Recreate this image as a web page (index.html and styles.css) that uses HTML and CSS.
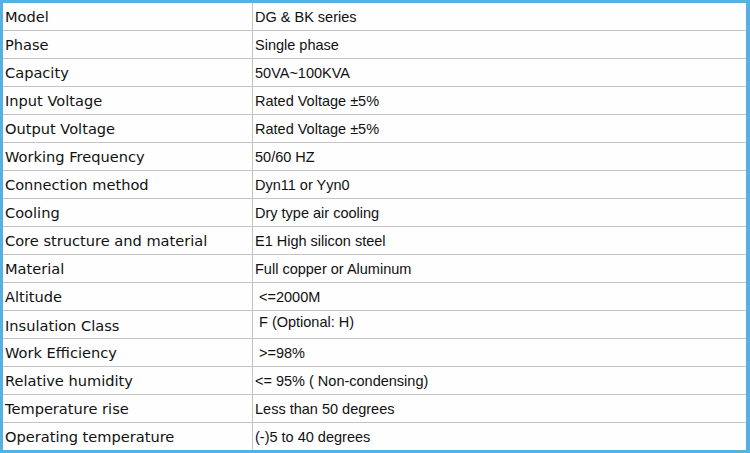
FILE: index.html
```html
<!DOCTYPE html>
<html>
<head>
<meta charset="utf-8">
<link rel="stylesheet" href="styles.css">
</head>
<body>
<div class="frame">
  <table class="spec">
    <tr><td class="k">Model</td><td class="v">DG &amp; BK series</td></tr>
    <tr><td class="k">Phase</td><td class="v">Single phase</td></tr>
    <tr><td class="k">Capacity</td><td class="v">50VA~100KVA</td></tr>
    <tr><td class="k">Input Voltage</td><td class="v">Rated Voltage ±5%</td></tr>
    <tr><td class="k">Output Voltage</td><td class="v">Rated Voltage ±5%</td></tr>
    <tr><td class="k">Working Frequency</td><td class="v">50/60 HZ</td></tr>
    <tr><td class="k">Connection method</td><td class="v">Dyn11 or Yyn0</td></tr>
    <tr><td class="k">Cooling</td><td class="v">Dry type air cooling</td></tr>
    <tr><td class="k">Core structure and material</td><td class="v">E1 High silicon steel</td></tr>
    <tr><td class="k">Material</td><td class="v">Full copper or Aluminum</td></tr>
    <tr><td class="k">Altitude</td><td class="v indent">&lt;=2000M</td></tr>
    <tr><td class="k low">Insulation Class</td><td class="v indent high">F (Optional: H)</td></tr>
    <tr><td class="k">Work Efficiency</td><td class="v indent">&gt;=98%</td></tr>
    <tr><td class="k">Relative humidity</td><td class="v">&lt;= 95% ( Non-condensing)</td></tr>
    <tr><td class="k">Temperature rise</td><td class="v">Less than 50 degrees</td></tr>
    <tr><td class="k">Operating temperature</td><td class="v">(-)5 to 40 degrees</td></tr>
  </table>
</div>
</body>
</html>
```
FILE: styles.css
```css
html, body {
  margin: 0;
  padding: 0;
  background: #ffffff;
}
.frame {
  width: 750px;
  height: 453px;
  box-sizing: border-box;
  border-style: solid;
  border-color: #56b1e2;
  border-width: 3px 4px 3px 3px;
  background: #fefefe;
}
.spec {
  width: 100%;
  border-collapse: collapse;
  table-layout: fixed;
}
.spec td {
  height: 27px;
  padding: 0;
  border-bottom: 1px solid #c4c4c4;
  box-sizing: content-box;
  white-space: nowrap;
  color: #111;
}
.spec tr:last-child td {
  border-bottom: none;
}
.k {
  width: 247px;
  padding-left: 2px !important;
  border-right: 1px solid #c4c4c4;
  font-family: "DejaVu Sans", sans-serif;
  font-size: 14.6px;
}
.v {
  padding-left: 2px !important;
  font-family: "Liberation Sans", Arial, sans-serif;
  font-size: 14.5px;
}
.indent {
  padding-left: 6px !important;
}
.low {
  padding-top: 2px !important;
  height: 25px !important;
}
.high {
  padding-bottom: 6px !important;
  height: 21px !important;
}
```
